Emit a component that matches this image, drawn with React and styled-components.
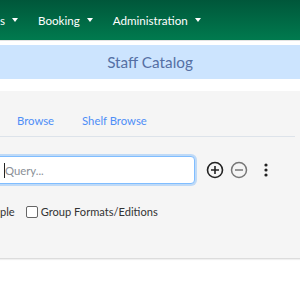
import React from "react";
import styled, { createGlobalStyle } from "styled-components";

const Global = createGlobalStyle`
  html, body { margin: 0; padding: 0; background: #fff; }
  body { width: 300px; height: 300px; overflow: hidden; font-family: Lato, "Noto Sans", sans-serif; }
`;

const Nav = styled.nav`
  height: 40px;
  background: linear-gradient(to bottom, #00573a, #007a4e);
  display: flex;
  align-items: center;
  gap: 20px;
  padding-left: 0;
  border-bottom: 1px solid #e3e3e3;
`;

const NavItem = styled.span`
  color: #fff;
  font-size: 11.6px;
  display: flex;
  align-items: center;
  white-space: nowrap;
  &::after {
    content: "";
    display: inline-block;
    margin-left: 7px;
    border-top: 4px solid #fff;
    border-left: 3.5px solid transparent;
    border-right: 3.5px solid transparent;
  }
`;

const Banner = styled.div`
  margin-top: 4px;
  height: 34px;
  background: #cce4fe;
  display: flex;
  align-items: center;
  justify-content: center;
  color: #5570a4;
  font-size: 15.3px;
`;

const Panel = styled.section`
  margin-top: 12px;
  height: 167px;
  background: #f5f5f5;
  border-bottom: 1px solid #dcdcdc;
  box-shadow: 0 1px 1px rgba(0,0,0,0.06);
`;

const Tabs = styled.div`
  display: flex;
  gap: 28px;
  padding: 15px 0 0 17px;
  height: 30px;
  box-sizing: content-box;
  width: 278px;
  border-bottom: 1px solid #dde3ea;
  align-items: center;
`;

const Tab = styled.a`
  color: #4e8ef7;
  font-size: 11.3px;
  text-decoration: none;
  margin-top: -1px;
`;

const SearchRow = styled.div`
  display: flex;
  align-items: center;
  margin-top: 19px;
  margin-left: -10px;
`;

const QueryInput = styled.div`
  width: 205px;
  height: 28px;
  box-sizing: border-box;
  border: 1px solid #80bdff;
  border-radius: 4px;
  background: #fff;
  box-shadow: 0 0 0 2px rgba(0, 123, 255, 0.22);
  display: flex;
  align-items: center;
  padding-left: 13px;
  font-size: 11.3px;
  color: #8a8f96;
  &::before {
    content: "";
    width: 1px;
    height: 15px;
    background: #222;
  }
`;

const IconBtn = styled.span`
  display: inline-flex;
  margin-left: ${(p) => p.$ml}px;
  color: ${(p) => p.$color};
`;

const Options = styled.div`
  display: flex;
  align-items: center;
  margin-top: 21px;
  font-size: 11.1px;
  color: #333;
`;

const Check = styled.label`
  display: flex;
  align-items: center;
  margin-left: 11px;
  gap: 3px;
`;

const Box = styled.span`
  width: 10px;
  height: 10px;
  border: 1px solid #666;
  border-radius: 2px;
  background: #fff;
`;

const PlusCircle = () => (
  <svg width="18" height="18" viewBox="0 0 18 18" fill="none" stroke="currentColor" strokeWidth="1.6">
    <circle cx="9" cy="9" r="7.5" />
    <path d="M9 5v8M5 9h8" />
  </svg>
);
const MinusCircle = () => (
  <svg width="18" height="18" viewBox="0 0 18 18" fill="none" stroke="currentColor" strokeWidth="1.5">
    <circle cx="9" cy="9" r="7.5" />
    <path d="M5 9h8" />
  </svg>
);
const Dots = () => (
  <svg width="4" height="14" viewBox="0 0 4 14" fill="currentColor">
    <circle cx="2" cy="2" r="1.6" />
    <circle cx="2" cy="7" r="1.6" />
    <circle cx="2" cy="12" r="1.6" />
  </svg>
);

export default function App() {
  return (
    <>
      <Global />
      <Nav>
        <NavItem>s</NavItem>
        <NavItem>Booking</NavItem>
        <NavItem>Administration</NavItem>
      </Nav>
      <Banner>Staff Catalog</Banner>
      <Panel>
        <Tabs>
          <Tab>Browse</Tab>
          <Tab>Shelf Browse</Tab>
        </Tabs>
        <SearchRow>
          <QueryInput>Query...</QueryInput>
          <IconBtn $ml={11} $color="#222"><PlusCircle /></IconBtn>
          <IconBtn $ml={6} $color="#777"><MinusCircle /></IconBtn>
          <IconBtn $ml={16} $color="#222"><Dots /></IconBtn>
        </SearchRow>
        <Options>
          <span>ple</span>
          <Check><Box />Group Formats/Editions</Check>
        </Options>
      </Panel>
    </>
  );
}
